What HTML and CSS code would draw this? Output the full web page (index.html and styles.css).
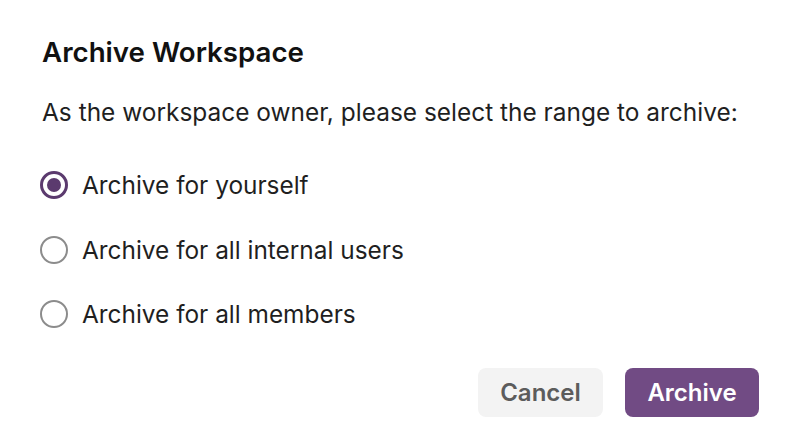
FILE: index.html
```html
<!DOCTYPE html>
<html>
<head>
<meta charset="utf-8">
<link rel="stylesheet" href="styles.css">
</head>
<body>
<div class="dialog">
  <h1 class="title">Archive Workspace</h1>
  <p class="desc">As the workspace owner, please select the range to archive:</p>
  <div class="options">
    <label class="option"><span class="radio checked"></span><span class="label">Archive for yourself</span></label>
    <label class="option"><span class="radio"></span><span class="label">Archive for all internal users</span></label>
    <label class="option"><span class="radio"></span><span class="label">Archive for all members</span></label>
  </div>
  <div class="actions">
    <button class="btn btn-cancel">Cancel</button>
    <button class="btn btn-primary">Archive</button>
  </div>
</div>
</body>
</html>
```
FILE: styles.css
```css
html, body {
  margin: 0;
  padding: 0;
  background: #ffffff;
}
body {
  font-family: Inter, "Liberation Sans", sans-serif;
  color: #1f1f1f;
}
.dialog {
  width: 788px;
  height: 438px;
  box-sizing: border-box;
  padding: 35px 29px 0 42px;
  display: flex;
  flex-direction: column;
}
.title {
  margin: 0;
  font-size: 27.7px;
  font-weight: 600;
  line-height: 34px;
  color: #111;
}
.desc {
  margin: 28px 0 0 0;
  font-size: 24.45px;
  line-height: 30px;
  color: #1f1f1f;
}
.options {
  display: flex;
  flex-direction: column;
  gap: 34.5px;
  margin-top: 43px;
}
.option {
  display: flex;
  align-items: center;
  gap: 14px;
  height: 30px;
  margin-left: -2px;
}
.radio {
  width: 24px;
  height: 24px;
  border: 2px solid #8c8c8c;
  border-radius: 50%;
  box-sizing: content-box;
  position: relative;
  flex: none;
}
.radio.checked {
  border: 3px solid #5b3a6e;
  width: 22px;
  height: 22px;
}
.radio.checked::after {
  content: "";
  position: absolute;
  left: 4px;
  top: 4px;
  width: 14px;
  height: 14px;
  border-radius: 50%;
  background: #5b3a6e;
}
.label {
  font-size: 24.4px;
  line-height: 30px;
  color: #1f1f1f;
}
.actions {
  display: flex;
  justify-content: flex-end;
  gap: 22px;
  margin-top: 39px;
}
.btn {
  font-family: Inter, "Liberation Sans", sans-serif;
  font-size: 24px;
  font-weight: 600;
  height: 49px;
  border: none;
  border-radius: 8px;
  padding: 0;
  cursor: pointer;
}
.btn-cancel {
  background: #f3f3f3;
  color: #5c5c5c;
  width: 125px;
}
.btn-primary {
  background: #714b84;
  color: #ffffff;
  width: 134px;
}
```
